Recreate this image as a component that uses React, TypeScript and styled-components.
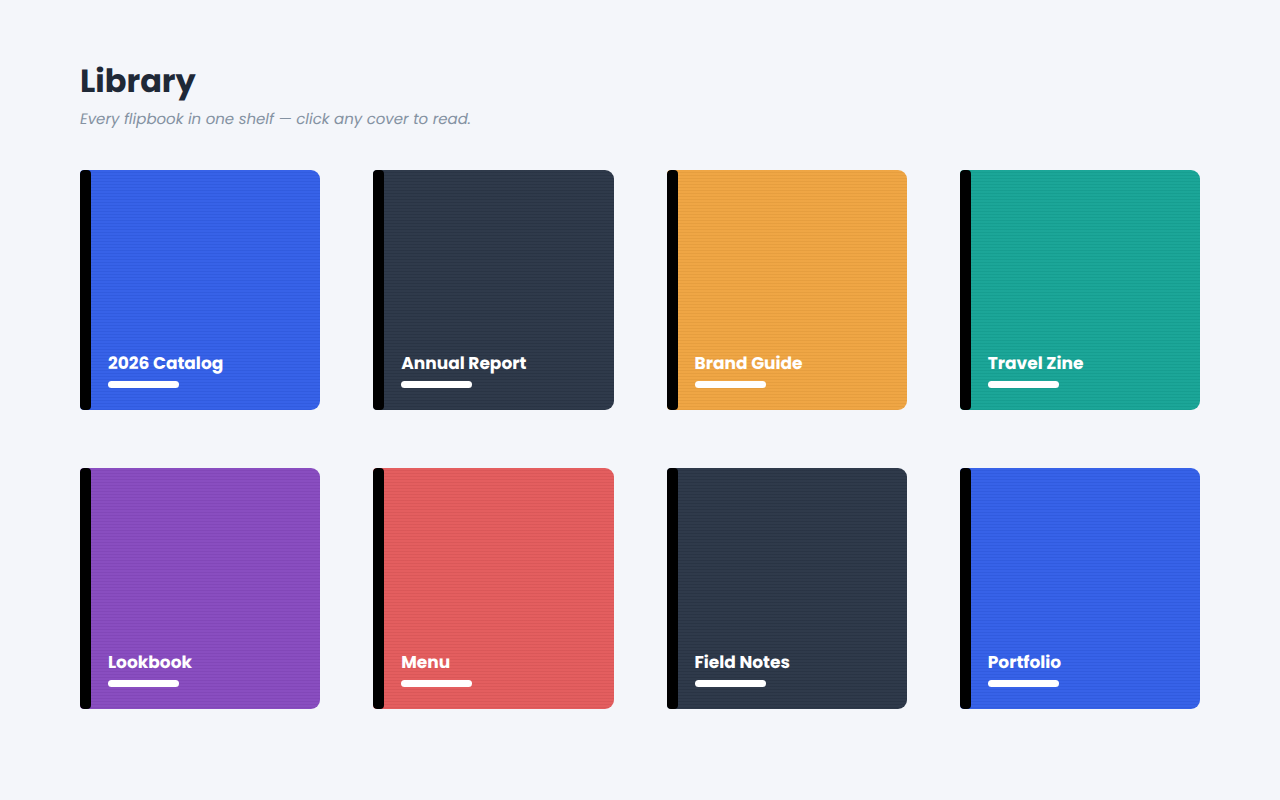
import React from "react";
import styled, { createGlobalStyle } from "styled-components";

const GlobalStyle = createGlobalStyle`
  *, *::before, *::after { box-sizing: border-box; }
  body {
    margin: 0;
    background: #f4f6fa;
    color: #1f2937;
    font-family: Poppins, Inter, sans-serif;
    text-rendering: geometricPrecision;
  }
`;

const Page = styled.main`
  padding: 61px 80px;
`;

const Header = styled.header`
  margin-bottom: 38px;
`;

const Title = styled.h1`
  margin: 0 0 6px;
  font-size: 32px;
  line-height: 41px;
  font-weight: 700;
`;

const Subtitle = styled.p`
  margin: 0;
  color: #8492a2;
  font-size: 15px;
  line-height: 24px;
  font-style: italic;
`;

const Shelf = styled.ul`
  display: grid;
  grid-template-columns: repeat(4, minmax(0, 1fr));
  gap: 58px 53px;
  margin: 0;
  padding: 0;
  list-style: none;
`;

const Cover = styled.a<{ $color: string }>`
  display: flex;
  aspect-ratio: 1;
  border-radius: 4px 9px 9px 4px;
  overflow: hidden;
  background-color: ${({ $color }) => $color};
  background-image: repeating-linear-gradient(
    to bottom,
    rgba(255, 255, 255, 0.02) 0 2px,
    rgba(0, 0, 0, 0.04) 2px 3px
  );
  color: #fff;
  text-decoration: none;
`;

const Spine = styled.span`
  flex: none;
  width: 11px;
  border-radius: 4px;
  background: #000;
`;

const Label = styled.span`
  display: flex;
  flex-direction: column;
  justify-content: flex-end;
  gap: 6px;
  padding: 0 17px 22px;
`;

const Name = styled.span`
  font-size: 17px;
  line-height: 23px;
  font-weight: 700;
`;

const Rule = styled.span`
  width: 71px;
  height: 7px;
  border-radius: 4px;
  background: #fff;
`;

const books = [
  { name: "2026 Catalog", color: "#335fe8" },
  { name: "Annual Report", color: "#2b3647" },
  { name: "Brand Guide", color: "#efa441" },
  { name: "Travel Zine", color: "#17a496" },
  { name: "Lookbook", color: "#874abf" },
  { name: "Menu", color: "#e35b5c" },
  { name: "Field Notes", color: "#2b3647" },
  { name: "Portfolio", color: "#335fe8" },
];

export default function App() {
  return (
    <>
      <GlobalStyle />
      <Page>
        <Header>
          <Title>Library</Title>
          <Subtitle>Every flipbook in one shelf — click any cover to read.</Subtitle>
        </Header>
        <Shelf>
          {books.map((book) => (
            <li key={book.name}>
              <Cover href="#" $color={book.color}>
                <Spine />
                <Label>
                  <Name>{book.name}</Name>
                  <Rule />
                </Label>
              </Cover>
            </li>
          ))}
        </Shelf>
      </Page>
    </>
  );
}
